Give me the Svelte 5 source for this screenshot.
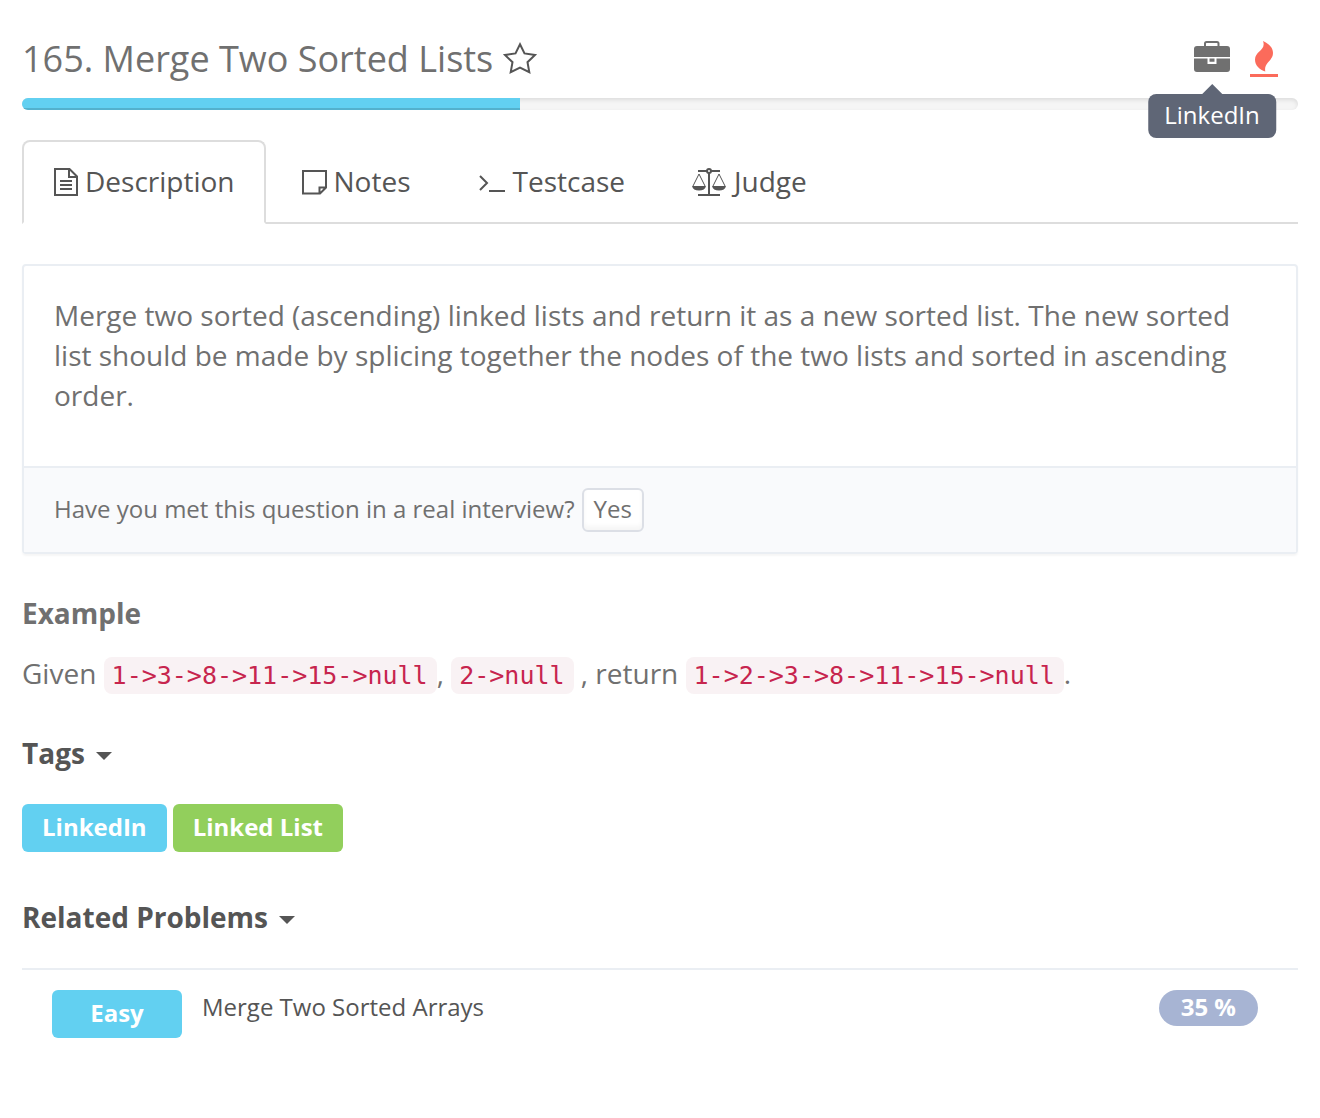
<script>
  let activeTab = $state('description');
  let showTags = $state(true);
  let showRelated = $state(true);
  const progress = 39;

  const tabs = [
    { id: 'description', label: 'Description' },
    { id: 'notes', label: 'Notes' },
    { id: 'testcase', label: 'Testcase' },
    { id: 'judge', label: 'Judge' }
  ];
  const tags = [
    { name: 'LinkedIn', kind: 'company' },
    { name: 'Linked List', kind: 'topic' }
  ];
  const related = [{ level: 'Easy', title: 'Merge Two Sorted Arrays', rate: '35 %' }];
</script>

<main class="page">
  <header class="heading">
    <h1>165. Merge Two Sorted Lists</h1>
    <button class="icon-button star" aria-label="Add to favorites">
      <svg width="36" height="34" viewBox="0 0 36 34">
        <path d="M18 2.3 L22.5 11.4 L33 13 L25.5 20.2 L27.3 30.2 L18 25.5 L8.7 30.2 L10.5 20.2 L3 13 L13.5 11.4 Z" />
      </svg>
    </button>
    <div class="badges">
      <button class="icon-button company" aria-label="Company" aria-describedby="company-tip">
        <svg width="38" height="34" viewBox="0 0 38 34">
          <path class="handle" d="M12 7 V3.5 Q12 2 13.5 2 H24 Q25.5 2 25.5 3.5 V7" />
          <path d="M4 6 H34 Q37 6 37 9 V17 H1 V9 Q1 6 4 6 Z M1 18.5 H14.5 V24 H23.5 V18.5 H37 V29 Q37 32 34 32 H4 Q1 32 1 29 Z M16.5 18.5 H21.5 V21.8 H16.5 Z" fill-rule="evenodd" />
        </svg>
        <span class="tooltip" id="company-tip" role="tooltip">LinkedIn</span>
      </button>
      <button class="icon-button hot" aria-label="Hot problem">
        <svg width="28" height="38" viewBox="0 0 28 38">
          <path d="M13 1 C18.5 3.5 23 7.5 23 13 C23 21 13.5 22.5 15.3 31.5 C9.5 29.5 5 25.5 5 19.5 C5 11 16.5 10 13 1 Z" />
          <path d="M0 34 H28 V37 H0 Z" />
        </svg>
      </button>
    </div>
  </header>

  <div class="progress" role="progressbar" aria-label="Acceptance" aria-valuenow={progress} aria-valuemin="0" aria-valuemax="100">
    <div class="bar" style:width="{progress}%"></div>
  </div>

  <div class="tabs" role="tablist">
    {#each tabs as tab}
      <button role="tab" class="tab" class:active={activeTab === tab.id} aria-selected={activeTab === tab.id} onclick={() => (activeTab = tab.id)}>
        {#if tab.id === 'description'}
          <svg width="24" height="28" viewBox="0 0 24 28">
            <path d="M1 1 H15.5 L23 8.5 V27 H1 Z M15 1 V9 H23 M6 13 H18 M6 17 H18 M6 21 H18" />
          </svg>
        {:else if tab.id === 'notes'}
          <svg width="25" height="28" viewBox="0 0 25 28">
            <path d="M1 3 H24 V19.5 L18 25.5 H1 Z M17.5 25.5 V19.5 H24" />
          </svg>
        {:else if tab.id === 'testcase'}
          <svg width="28" height="28" viewBox="0 0 28 28">
            <path d="M2 8 L9 15 L2 22 M11 23 H27" />
          </svg>
        {:else}
          <svg width="35" height="28" viewBox="0 0 35 28">
            <path d="M6 3 H15 M19 3 H28 M17 5 V27 M6 27 H28" />
            <circle cx="17" cy="3" r="2" />
            <path class="thin" d="M1 18 L7 6 L13 18 M21 18 L27 6 L33 18" />
            <path class="solid" d="M0 18 H14 Q13 22.5 7 22.5 Q1 22.5 0 18 Z M20 18 H34 Q33 22.5 27 22.5 Q21 22.5 20 18 Z" />
          </svg>
        {/if}
        <span>{tab.label}</span>
      </button>
    {/each}
    <div class="rest"></div>
  </div>

  <section class="panel">
    <p class="statement">
      Merge two sorted (ascending) linked lists and return it as a new sorted list. The new sorted list should be made by splicing together the nodes of the two lists and sorted in ascending order.
    </p>
    <div class="question">
      <span>Have you met this question in a real interview?</span>
      <button class="yes">Yes</button>
    </div>
  </section>

  <section class="example">
    <h2>Example</h2>
    <p>Given <code>1-&gt;3-&gt;8-&gt;11-&gt;15-&gt;null</code>, <code>2-&gt;null</code> , return <code>1-&gt;2-&gt;3-&gt;8-&gt;11-&gt;15-&gt;null</code>.</p>
  </section>

  <section class="group">
    <h2><button class="toggle" aria-expanded={showTags} onclick={() => (showTags = !showTags)}>Tags<span class="caret"></span></button></h2>
    {#if showTags}
      <div class="tags">
        {#each tags as tag}
          <a href="#{tag.kind}" class="label {tag.kind}">{tag.name}</a>
        {/each}
      </div>
    {/if}
  </section>

  <section class="group">
    <h2><button class="toggle" aria-expanded={showRelated} onclick={() => (showRelated = !showRelated)}>Related Problems<span class="caret"></span></button></h2>
    {#if showRelated}
      <ul class="related">
        {#each related as item}
          <li>
            <span class="label level">{item.level}</span>
            <a href="#problem" class="problem">{item.title}</a>
            <span class="rate">{item.rate}</span>
          </li>
        {/each}
      </ul>
    {/if}
  </section>
</main>

<style>
  :global(body) {
    background: #fff;
  }
  .page {
    box-sizing: border-box;
    padding: 36px 22px 40px;
    font: 28px/40px 'Open Sans', sans-serif;
    color: #707070;
  }
  button {
    font: inherit;
    color: inherit;
    background: none;
    border: 0;
    padding: 0;
    cursor: pointer;
  }
  a {
    color: inherit;
    text-decoration: none;
  }
  h1, h2, p, ul {
    margin: 0;
    padding: 0;
  }
  .heading {
    display: flex;
    align-items: center;
    gap: 9px;
    height: 46px;
  }
  h1 {
    font-size: 36px;
    line-height: 46px;
    font-weight: 400;
  }
  .icon-button {
    display: flex;
    position: relative;
  }
  .star path {
    fill: none;
    stroke: #555;
    stroke-width: 2;
  }
  .badges {
    display: flex;
    align-items: flex-start;
    gap: 19px;
    margin-left: auto;
    padding-right: 20px;
  }
  .icon-button.company path {
    fill: #707070;
  }
  .icon-button.company .handle {
    fill: none;
    stroke: #707070;
    stroke-width: 2;
  }
  .hot path {
    fill: #fb6b5b;
  }
  .tooltip {
    position: absolute;
    top: 100%;
    left: 50%;
    transform: translateX(-50%);
    margin-top: 20px;
    padding: 4px 16px 6px;
    border-radius: 8px;
    background: #5f6676;
    color: #fff;
    font-size: 24px;
    line-height: 34px;
    z-index: 1;
  }
  .tooltip::before {
    content: '';
    position: absolute;
    bottom: 100%;
    left: 50%;
    margin-left: -10px;
    border: 10px solid transparent;
    border-top: 0;
    border-bottom-color: #5f6676;
  }
  .progress {
    height: 12px;
    margin-top: 16px;
    border-radius: 6px;
    overflow: hidden;
    background: #f5f5f5;
    box-shadow: inset 0 2px 4px rgba(0, 0, 0, 0.1);
  }
  .bar {
    height: 100%;
    background: #62d0f1;
    box-shadow: inset 0 -2px 0 rgba(0, 0, 0, 0.15);
  }
  .tabs {
    display: flex;
    margin-top: 30px;
    color: #555;
  }
  .tab {
    display: flex;
    align-items: center;
    gap: 7px;
    padding: 19px 31px 21px 36px;
    border: solid transparent;
    border-width: 2px 0;
    border-bottom-color: #ddd;
  }
  .tab.active {
    padding: 19px 29px 21px 30px;
    border-width: 2px;
    border-color: #ddd;
    border-bottom-color: transparent;
    border-radius: 8px 8px 0 0;
  }
  .rest {
    flex: 1;
    border-bottom: 2px solid #ddd;
  }
  .tab svg {
    margin-top: 2px;
  }
  .tab path, .tab circle {
    fill: none;
    stroke: #555;
    stroke-width: 2;
  }
  .tab .thin {
    stroke-width: 1;
  }
  .tab .solid {
    fill: #555;
    stroke: none;
  }
  .panel {
    margin-top: 40px;
    border: 2px solid #eaeef3;
    border-radius: 4px;
    box-shadow: 0 2px 2px rgba(0, 0, 0, 0.04);
  }
  .statement {
    padding: 29px 30px 51px;
  }
  .question {
    display: flex;
    align-items: center;
    gap: 7px;
    padding: 20px 30px;
    border-top: 2px solid #eaeef3;
    background: #f9fafc;
    font-size: 24px;
  }
  .question span {
    padding-bottom: 2px;
  }
  .yes {
    padding: 0 10px 2px;
    line-height: 38px;
    border: 2px solid #dcdfe6;
    border-radius: 6px;
    background: #fff;
    box-shadow: inset 0 -4px 4px rgba(0, 0, 0, 0.04);
  }
  h2 {
    font-size: 28px;
    line-height: 40px;
    font-weight: 700;
  }
  .example {
    display: grid;
    gap: 20px;
    margin-top: 39px;
  }
  code {
    padding: 4px 9px 4px 8px;
    border-radius: 8px;
    background: #f9f2f4;
    color: #c7254e;
    font: 25px 'DejaVu Sans Mono', monospace;
  }
  .group {
    margin-top: 40px;
  }
  .toggle {
    display: flex;
    align-items: center;
    gap: 11px;
    color: #555;
  }
  .caret {
    margin-top: 6px;
    border: 8px solid transparent;
    border-top-color: #555;
    border-bottom: 0;
  }
  .tags {
    display: flex;
    gap: 6px;
    margin-top: 31px;
    padding-bottom: 5px;
  }
  .label {
    padding: 3px 20px 5px;
    border-radius: 6px;
    color: #fff;
    font-size: 24px;
    font-weight: 700;
    text-align: center;
  }
  .label.company, .level {
    background: #62d0f1;
  }
  .topic {
    background: #92cf5c;
  }
  .related {
    list-style: none;
    margin-top: 31px;
    border-top: 2px solid #eaeef3;
  }
  li {
    display: flex;
    align-items: flex-start;
    gap: 20px;
    padding: 20px 40px 20px 30px;
    font-size: 24px;
  }
  .level {
    width: 90px;
  }
  .problem {
    color: #555;
    line-height: 34px;
  }
  .rate {
    margin-left: auto;
    padding: 0 22px 2px;
    border-radius: 18px;
    background: #a7b4d3;
    color: #fff;
    font-weight: 700;
    line-height: 34px;
  }
</style>
